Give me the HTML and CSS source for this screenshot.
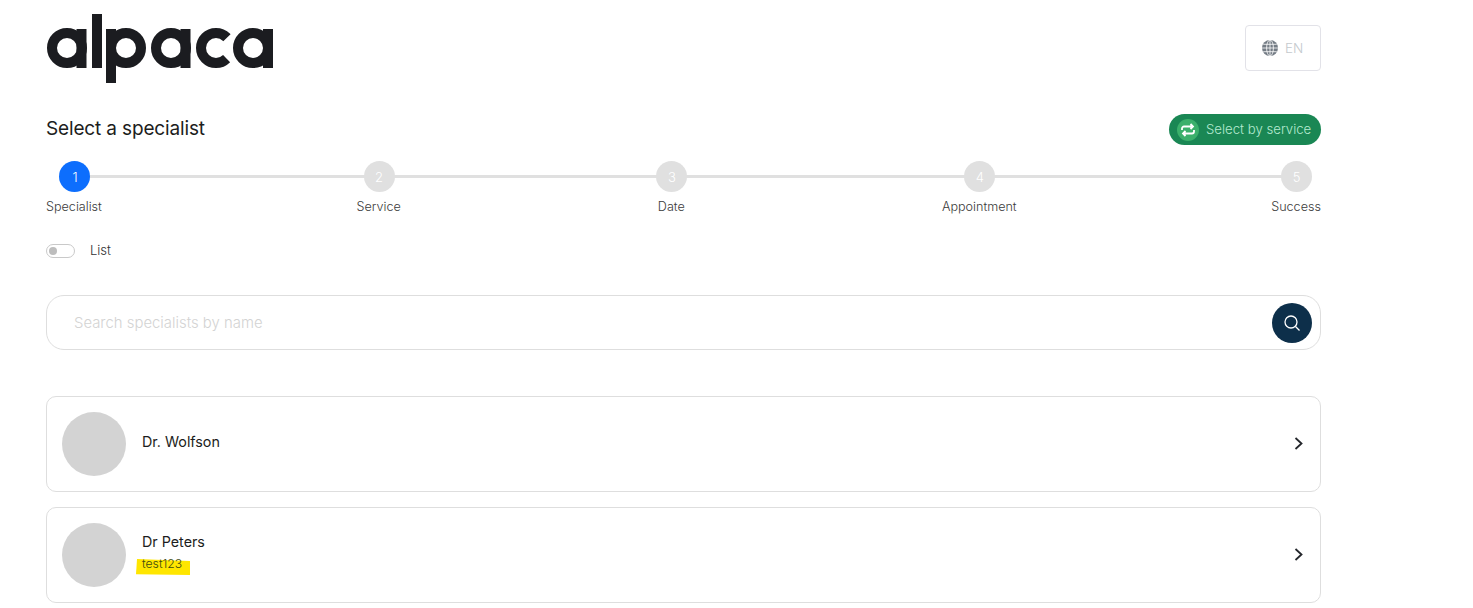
FILE: index.html
```html
<!DOCTYPE html>
<html lang="en">
<head>
<meta charset="utf-8">
<title>Select a specialist</title>
<link rel="stylesheet" href="styles.css">
</head>
<body>
<main class="page">
  <header class="top">
    <svg class="logo" viewBox="0 0 227 69" role="img" aria-label="alpaca">
      <g class="logo-rings">
        <circle cx="21" cy="34" r="15"/>
        <circle cx="80" cy="34" r="15"/>
        <circle cx="125" cy="34" r="15"/>
        <circle class="logo-c" cx="170" cy="34" r="15" transform="rotate(45 170 34)"/>
        <circle cx="207" cy="34" r="15"/>
      </g>
      <rect x="30.500" y="15" width="10" height="39"/>
      <rect x="46" y="0" width="10" height="54"/>
      <rect x="60" y="15" width="10" height="54"/>
      <rect x="134.500" y="15" width="10" height="39"/>
      <rect x="217" y="15" width="10" height="39"/>
    </svg>
    <button class="lang" type="button">
      <svg class="globe" viewBox="0 0 16 16" aria-hidden="true">
        <circle cx="8" cy="8" r="8" class="globe-fill"/>
        <ellipse cx="8" cy="8" rx="3.400" ry="8"/>
        <path d="M8 0v16M0 8h16M1.200 4.300h13.600M1.200 11.700h13.600"/>
      </svg>
      <span>EN</span>
    </button>
  </header>

  <section class="title-row">
    <h1>Select a specialist</h1>
    <button class="by-service" type="button">
      <span class="by-icon">
        <svg viewBox="0 0 16 16" aria-hidden="true">
          <path d="M2 8V6.500a2 2 0 0 1 2-2h9M10.500 2L13 4.500 10.500 7M14 8v1.500a2 2 0 0 1-2 2H3M5.500 9L3 11.500 5.500 14"/>
        </svg>
      </span>
      <span class="by-text">Select by service</span>
    </button>
  </section>

  <ol class="steps">
    <li class="step active"><span class="dot">1</span><span class="label">Specialist</span></li>
    <li class="step"><span class="dot">2</span><span class="label">Service</span></li>
    <li class="step"><span class="dot">3</span><span class="label">Date</span></li>
    <li class="step"><span class="dot">4</span><span class="label">Appointment</span></li>
    <li class="step"><span class="dot">5</span><span class="label">Success</span></li>
  </ol>

  <div class="toggle-row">
    <span class="toggle"><span class="knob"></span></span>
    <span class="toggle-label">List</span>
  </div>

  <form class="search">
    <input type="text" placeholder="Search specialists by name">
    <button class="search-btn" type="button" aria-label="Search">
      <svg viewBox="0 0 18 18" aria-hidden="true">
        <circle cx="8" cy="8" r="6"/>
        <path d="M12.500 12.500L16.500 16.500"/>
      </svg>
    </button>
  </form>

  <ul class="cards">
    <li class="card">
      <span class="avatar"></span>
      <div class="info"><div class="name">Dr. Wolfson</div></div>
      <svg class="chev" viewBox="0 0 9 13" aria-hidden="true"><path d="M1.500 1l6 5.500-6 5.500"/></svg>
    </li>
    <li class="card">
      <span class="avatar"></span>
      <div class="info">
        <div class="name">Dr Peters</div>
        <div class="note"><span class="marker"></span><span class="note-text">test123</span></div>
      </div>
      <svg class="chev" viewBox="0 0 9 13" aria-hidden="true"><path d="M1.500 1l6 5.500-6 5.500"/></svg>
    </li>
  </ul>
</main>
</body>
</html>
```
FILE: styles.css
```css
* { box-sizing: border-box; }
html, body { margin: 0; background: #fff; overflow: hidden; }
body { font-family: "Inter", "Liberation Sans", sans-serif; color: #1c1d20; }
.page { width: 1321px; padding: 14px 0 0 46px; }

.top { display: flex; justify-content: space-between; align-items: flex-start; height: 69px; }
.logo { width: 227px; height: 69px; display: block; fill: #1b1c20; }
.logo-rings circle { fill: none; stroke: #1b1c20; stroke-width: 10; }
.logo-rings .logo-c { stroke-dasharray: 70.690 23.560; }
.lang {
  margin-top: 11px; width: 76px; height: 46px; padding: 0 0 0 16px;
  display: flex; align-items: center; gap: 7px;
  background: #fff; border: 1px solid #e2e2e8; border-radius: 4px;
  font: 300 13.500px "Inter", sans-serif; color: #c4c9cd;
}
.globe { width: 16px; height: 16px; fill: none; stroke: #fff; stroke-width: .8; }
.globe-fill { fill: #747c85; stroke: none; }

.title-row { display: flex; justify-content: space-between; align-items: center; margin-top: 31px; height: 31px; }
h1 { margin: 0 0 2px; font-size: 19px; font-weight: 400; letter-spacing: -.15px; }
.by-service {
  width: 152px; height: 31px; padding: 0 0 0 8px;
  display: flex; align-items: center; gap: 7px;
  background: #1a8754; border: 0; border-radius: 16px;
  font: 300 13.200px "Inter", sans-serif; color: #b5ead0; white-space: nowrap;
}
.by-text { margin-bottom: 2px; }
.by-icon { width: 22px; height: 22px; border-radius: 50%; background: #3bb06b; display: flex; align-items: center; justify-content: center; flex: none; }
.by-icon svg { width: 16px; height: 16px; fill: none; stroke: #fff; stroke-width: 1.800; }

.steps { position: relative; list-style: none; margin: 16px 0 0; padding: 0; display: flex; justify-content: space-between; }
.steps::before { content: ""; position: absolute; left: 28px; right: 24px; top: 14px; height: 3px; background: #e0e0e0; }
.step { position: relative; display: flex; flex-direction: column; align-items: center; }
.dot {
  width: 31px; height: 31px; margin-left: 1px; border-radius: 50%; background: #e0e0e0; color: #fff;
  display: flex; align-items: center; justify-content: center; font-size: 13px; font-weight: 300;
}
.step.active .dot { margin-left: 2px; background: #0d6efd; }
.label { margin-top: 6px; font-size: 12.600px; line-height: 18px; font-weight: 300; color: #3a3a3a; }

.toggle-row { display: flex; align-items: center; gap: 15px; margin-top: 26px; height: 16px; }
.toggle { width: 29px; height: 14px; margin-top: 2px; border: 1px solid #c9c9c9; border-radius: 7px; display: flex; align-items: center; padding-left: 2px; }
.knob { width: 8px; height: 8px; border-radius: 50%; background: #bdbdbd; }
.toggle-label { font-size: 13px; font-weight: 300; color: #333; }

.search {
  display: flex; align-items: center; justify-content: space-between;
  margin-top: 37px; height: 55px; padding: 0 8px 0 27px;
  border: 1px solid #dedede; border-radius: 18px;
}
.search input { flex: 1; border: 0; outline: 0; padding: 0; background: none; font: 300 14.900px "Inter", sans-serif; color: #333; }
.search input::placeholder { color: #d3d3d3; opacity: 1; }
.search-btn { width: 40px; height: 40px; border-radius: 50%; border: 0; padding: 0; background: #0d2f4a; display: flex; align-items: center; justify-content: center; }
.search-btn svg { width: 18px; height: 18px; fill: none; stroke: #fff; stroke-width: 1.300; }

.cards { list-style: none; margin: 46px 0 0; padding: 0; display: flex; flex-direction: column; gap: 15px; }
.card { height: 96px; padding: 0 17px 0 15px; display: flex; align-items: center; border: 1px solid #dedede; border-radius: 10px; }
.avatar { width: 64px; height: 64px; border-radius: 50%; background: #d3d3d3; flex: none; }
.info { margin: 0 0 5px 16px; flex: 1; }
.name { font-size: 14.300px; line-height: 18px; font-weight: 400; }
.note { position: relative; margin-top: 5px; font-size: 12.200px; line-height: 16px; font-weight: 300; }
.marker { position: absolute; left: -6px; top: 3px; width: 54px; height: 16px; background: #ffe600; clip-path: polygon(1px 0, 100% 2px, 100% 100%, 0 96%); }
.note-text { position: relative; color: #3d4a10; }
.chev { width: 9px; height: 13px; margin-bottom: 1px; fill: none; stroke: #23262b; stroke-width: 1.800; flex: none; }
```
